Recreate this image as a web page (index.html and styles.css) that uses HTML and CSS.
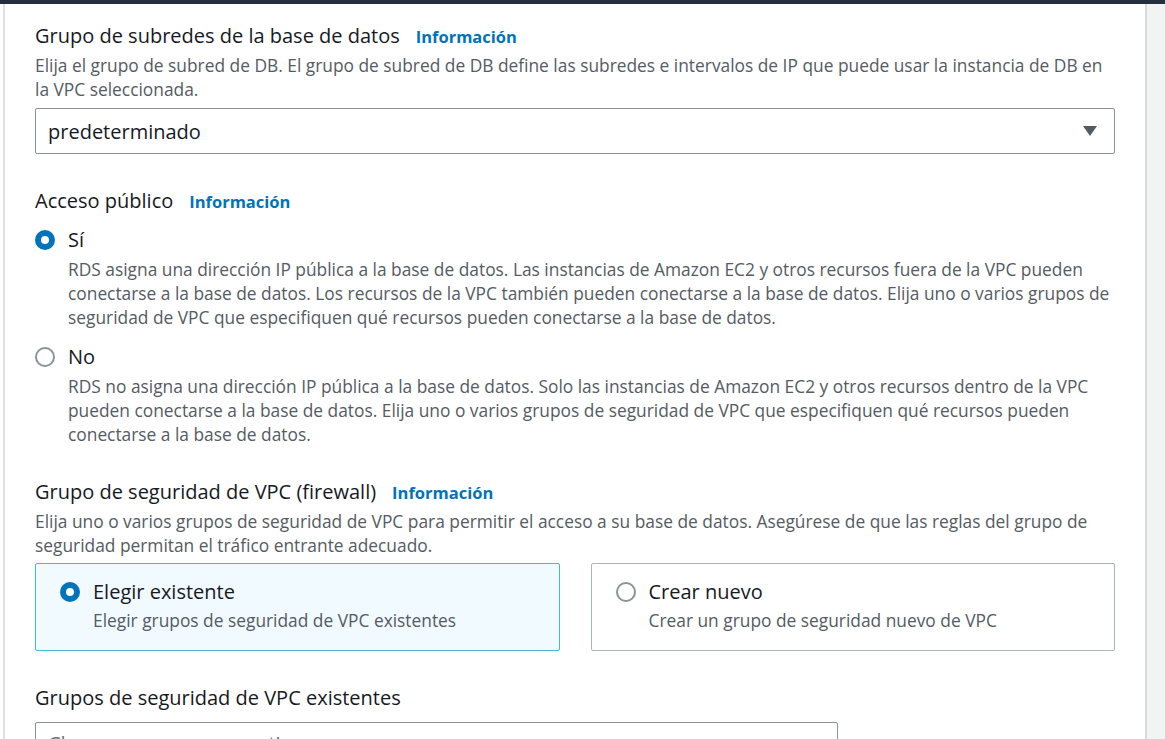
FILE: index.html
```html
<!DOCTYPE html>
<html lang="es">
<head>
<meta charset="utf-8">
<link rel="stylesheet" href="styles.css">
</head>
<body>
<div class="topbar"></div>
<div class="layout">
  <div class="gutter"></div>
  <main class="content">
    <section class="field field-first">
      <div class="label-row"><span class="label">Grupo de subredes de la base de datos</span><a class="info">Información</a></div>
      <p class="desc">Elija el grupo de subred de DB. El grupo de subred de DB define las subredes e intervalos de IP que puede usar la instancia de DB en la VPC seleccionada.</p>
      <div class="select">
        <span>predeterminado</span>
        <svg class="caret" width="16" height="12" viewBox="0 0 16 12"><path d="M1 1 H15 L8 11 Z" fill="#545b64"/></svg>
      </div>
    </section>

    <section class="field">
      <div class="label-row"><span class="label">Acceso público</span><a class="info">Información</a></div>
      <div class="radio-group">
        <div class="radio-item">
          <div class="radio-row"><span class="radio checked"></span><span class="radio-label">Sí</span></div>
          <p class="radio-desc">RDS asigna una dirección IP pública a la base de datos. Las instancias de Amazon EC2 y otros recursos fuera de la VPC pueden conectarse a la base de datos. Los recursos de la VPC también pueden conectarse a la base de datos. Elija uno o varios grupos de seguridad de VPC que especifiquen qué recursos pueden conectarse a la base de datos.</p>
        </div>
        <div class="radio-item">
          <div class="radio-row"><span class="radio"></span><span class="radio-label">No</span></div>
          <p class="radio-desc">RDS no asigna una dirección IP pública a la base de datos. Solo las instancias de Amazon EC2 y otros recursos dentro de la VPC pueden conectarse a la base de datos. Elija uno o varios grupos de seguridad de VPC que especifiquen qué recursos pueden conectarse a la base de datos.</p>
        </div>
      </div>
    </section>

    <section class="field field-vpc">
      <div class="label-row"><span class="label">Grupo de seguridad de VPC (firewall)</span><a class="info">Información</a></div>
      <p class="desc">Elija uno o varios grupos de seguridad de VPC para permitir el acceso a su base de datos. Asegúrese de que las reglas del grupo de seguridad permitan el tráfico entrante adecuado.</p>
      <div class="tiles">
        <div class="tile selected">
          <div class="radio-row"><span class="radio checked"></span><span class="radio-label">Elegir existente</span></div>
          <p class="tile-desc">Elegir grupos de seguridad de VPC existentes</p>
        </div>
        <div class="tile">
          <div class="radio-row"><span class="radio"></span><span class="radio-label">Crear nuevo</span></div>
          <p class="tile-desc">Crear un grupo de seguridad nuevo de VPC</p>
        </div>
      </div>
    </section>

    <section class="field">
      <div class="label-row"><span class="label">Grupos de seguridad de VPC existentes</span></div>
      <div class="multiselect"><span>Choose one or more options</span></div>
    </section>
  </main>
  <aside class="side"></aside>
</div>
</body>
</html>
```

FILE: styles.css
```css
* { box-sizing: border-box; }
html, body {
  margin: 0;
  height: 100%;
  overflow: hidden;
  background: #ffffff;
  font-family: "Open Sans", "Noto Sans", "Liberation Sans", sans-serif;
  color: #16191f;
}
.topbar {
  height: 4px;
  background: #232f3e;
}
.layout {
  display: flex;
  height: calc(100% - 4px);
}
.gutter {
  width: 5px;
  flex: none;
  border-right: 2px solid #dfe2e2;
  background: #ffffff;
}
.content {
  flex: 1;
  padding: 0 30px 0 30px;
  min-width: 0;
}
.side {
  width: 20px;
  flex: none;
  background: #f2f3f3;
  border-left: 2px solid #d5dbdb;
}
.field { margin-top: 35px; }
.field-first { margin-top: 20px; }
.field-vpc { margin-top: 34px; }
.label-row {
  display: flex;
  align-items: baseline;
  height: 24px;
  line-height: 24px;
}
.label {
  font-size: 20px;
  color: #16191f;
}
.info {
  margin-left: 16px;
  font-size: 16.5px;
  font-weight: 700;
  color: #0073bb;
}
.desc {
  margin: 5px 0 0 0;
  font-size: 17.35px;
  line-height: 24px;
  color: #545b64;
}
.select {
  margin-top: 7px;
  height: 46px;
  border: 1px solid #879596;
  border-radius: 2px;
  display: flex;
  align-items: center;
  justify-content: space-between;
  padding: 0 16px 0 12px;
  font-size: 20px;
  color: #16191f;
}
.radio-group { margin-top: 15px; }
.radio-item + .radio-item { margin-top: 16px; }
.radio-row {
  display: flex;
  align-items: center;
  height: 24px;
  line-height: 24px;
}
.radio {
  width: 20px;
  height: 20px;
  border-radius: 50%;
  border: 2px solid #879596;
  background: #ffffff;
  flex: none;
}
.radio.checked {
  border: 6px solid #0073bb;
}
.radio-label {
  margin-left: 13px;
  font-size: 20px;
  color: #16191f;
}
.radio-desc {
  margin: 5px 0 0 33px;
  font-size: 17.35px;
  line-height: 24px;
  color: #545b64;
}
.tiles {
  margin-top: 6px;
  display: grid;
  grid-template-columns: 1fr 1fr;
  gap: 31px;
}
.tile {
  height: 88px;
  border: 1px solid #aab7b8;
  border-radius: 2px;
  padding: 16px 24px 0 24px;
}
.tile.selected {
  background: #f1faff;
  border-color: #44b9d6;
}
.tile-desc {
  margin: 4px 0 0 33px;
  font-size: 17.35px;
  line-height: 24px;
  color: #545b64;
}
.multiselect {
  margin-top: 12px;
  width: 803px;
  height: 46px;
  border: 1px solid #879596;
  border-radius: 2px;
  padding: 9px 12px;
  font-size: 20px;
  line-height: 24px;
  color: #687078;
}
```
